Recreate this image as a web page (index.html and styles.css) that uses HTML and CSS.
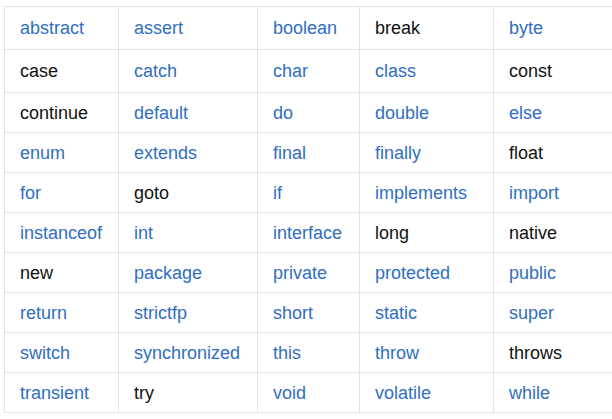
FILE: index.html
```html
<!DOCTYPE html>
<html>
<head>
<meta charset="utf-8">
<link rel="stylesheet" href="styles.css">
</head>
<body>
<table class="kw">
<colgroup><col class="c1"><col class="c2"><col class="c3"><col class="c4"><col class="c5"></colgroup>
<tbody>
<tr class="tall"><td><a>abstract</a></td><td><a>assert</a></td><td><a>boolean</a></td><td>break</td><td><a>byte</a></td></tr>
<tr class="tall"><td>case</td><td><a>catch</a></td><td><a>char</a></td><td><a>class</a></td><td>const</td></tr>
<tr><td>continue</td><td><a>default</a></td><td><a>do</a></td><td><a>double</a></td><td><a>else</a></td></tr>
<tr><td><a>enum</a></td><td><a>extends</a></td><td><a>final</a></td><td><a>finally</a></td><td>float</td></tr>
<tr><td><a>for</a></td><td>goto</td><td><a>if</a></td><td><a>implements</a></td><td><a>import</a></td></tr>
<tr><td><a>instanceof</a></td><td><a>int</a></td><td><a>interface</a></td><td>long</td><td>native</td></tr>
<tr><td>new</td><td><a>package</a></td><td><a>private</a></td><td><a>protected</a></td><td><a>public</a></td></tr>
<tr><td><a>return</a></td><td><a>strictfp</a></td><td><a>short</a></td><td><a>static</a></td><td><a>super</a></td></tr>
<tr><td><a>switch</a></td><td><a>synchronized</a></td><td><a>this</a></td><td><a>throw</a></td><td>throws</td></tr>
<tr><td><a>transient</a></td><td>try</td><td><a>void</a></td><td><a>volatile</a></td><td><a>while</a></td></tr>
</tbody>
</table>
</body>
</html>
```
FILE: styles.css
```css
html { overflow: hidden; }
body {
  margin: 0;
  padding: 6px 0 0 4px;
  background: #fff;
  font-family: "Liberation Sans", Arial, sans-serif;
  font-size: 18px;
  color: #111;
}
.kw {
  border-collapse: collapse;
  table-layout: fixed;
  width: 608px;
}
.kw .c1 { width: 114px; }
.kw .c2 { width: 139px; }
.kw .c3 { width: 102px; }
.kw .c4 { width: 134px; }
.kw .c5 { width: 119px; }
.kw td {
  border: 1px solid #e3e3e3;
  padding: 0 0 0 15px;
  height: 39px;
  vertical-align: middle;
  white-space: nowrap;
  line-height: 20px;
}
.kw td:last-child { border-right: none; }
.kw tr.tall td { height: 42px; }
.kw a {
  color: #2f6ec2;
  text-decoration: none;
}
```
